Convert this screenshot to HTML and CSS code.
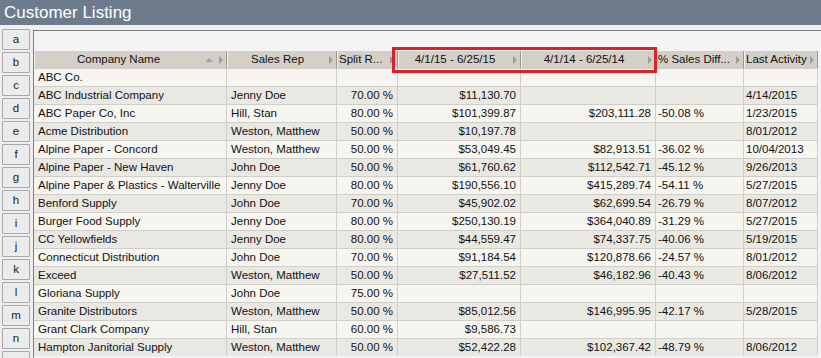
FILE: index.html
```html
<!DOCTYPE html>
<html>
<head>
<meta charset="utf-8">
<link rel="stylesheet" href="styles.css">
</head>
<body>
<div class="titlebar">Customer Listing</div>
<div class="content">
  <div class="letters">
    <div class="letter">a</div><div class="letter">b</div><div class="letter">c</div><div class="letter">d</div>
    <div class="letter">e</div><div class="letter">f</div><div class="letter">g</div><div class="letter">h</div>
    <div class="letter">i</div><div class="letter">j</div><div class="letter">k</div><div class="letter">l</div>
    <div class="letter">m</div><div class="letter">n</div><div class="letter"></div>
  </div>
  <div class="grid-frame">
    <div class="grid-top"></div>
    <table class="grid">
      <colgroup>
        <col class="c-company"><col class="c-rep"><col class="c-split"><col class="c-cur"><col class="c-prev"><col class="c-diff"><col class="c-last">
      </colgroup>
      <thead>
        <tr>
          <th><div class="hd"><span class="ht center">Company Name</span><span class="sort-up"></span><span class="arr"></span></div></th>
          <th><div class="hd"><span class="ht center">Sales Rep</span><span class="arr"></span></div></th>
          <th><div class="hd"><span class="ht">Split R...</span><span class="arr"></span></div></th>
          <th><div class="hd"><span class="ht center">4/1/15 - 6/25/15</span><span class="arr"></span></div></th>
          <th><div class="hd"><span class="ht center">4/1/14 - 6/25/14</span><span class="arr"></span></div></th>
          <th><div class="hd"><span class="ht">% Sales Diff...</span><span class="arr"></span></div></th>
          <th><div class="hd"><span class="ht">Last Activity</span><span class="arr"></span></div></th>
        </tr>
      </thead>
      <tbody>
        <tr><td>ABC Co.</td><td></td><td class="r"></td><td class="r"></td><td class="r"></td><td></td><td></td></tr>
        <tr><td>ABC Industrial Company</td><td>Jenny Doe</td><td class="r">70.00 %</td><td class="r">$11,130.70</td><td class="r"></td><td></td><td>4/14/2015</td></tr>
        <tr><td>ABC Paper Co, Inc</td><td>Hill, Stan</td><td class="r">80.00 %</td><td class="r">$101,399.87</td><td class="r">$203,111.28</td><td>-50.08 %</td><td>1/23/2015</td></tr>
        <tr><td>Acme Distribution</td><td>Weston, Matthew</td><td class="r">50.00 %</td><td class="r">$10,197.78</td><td class="r"></td><td></td><td>8/01/2012</td></tr>
        <tr><td>Alpine Paper - Concord</td><td>Weston, Matthew</td><td class="r">50.00 %</td><td class="r">$53,049.45</td><td class="r">$82,913.51</td><td>-36.02 %</td><td>10/04/2013</td></tr>
        <tr><td>Alpine Paper - New Haven</td><td>John Doe</td><td class="r">50.00 %</td><td class="r">$61,760.62</td><td class="r">$112,542.71</td><td>-45.12 %</td><td>9/26/2013</td></tr>
        <tr><td>Alpine Paper &amp; Plastics - Walterville</td><td>Jenny Doe</td><td class="r">80.00 %</td><td class="r">$190,556.10</td><td class="r">$415,289.74</td><td>-54.11 %</td><td>5/27/2015</td></tr>
        <tr><td>Benford Supply</td><td>John Doe</td><td class="r">70.00 %</td><td class="r">$45,902.02</td><td class="r">$62,699.54</td><td>-26.79 %</td><td>8/07/2012</td></tr>
        <tr><td>Burger Food Supply</td><td>Jenny Doe</td><td class="r">80.00 %</td><td class="r">$250,130.19</td><td class="r">$364,040.89</td><td>-31.29 %</td><td>5/27/2015</td></tr>
        <tr><td>CC Yellowfields</td><td>Jenny Doe</td><td class="r">80.00 %</td><td class="r">$44,559.47</td><td class="r">$74,337.75</td><td>-40.06 %</td><td>5/19/2015</td></tr>
        <tr><td>Connecticut Distribution</td><td>John Doe</td><td class="r">70.00 %</td><td class="r">$91,184.54</td><td class="r">$120,878.66</td><td>-24.57 %</td><td>8/01/2012</td></tr>
        <tr><td>Exceed</td><td>Weston, Matthew</td><td class="r">50.00 %</td><td class="r">$27,511.52</td><td class="r">$46,182.96</td><td>-40.43 %</td><td>8/06/2012</td></tr>
        <tr><td>Gloriana Supply</td><td>John Doe</td><td class="r">75.00 %</td><td class="r"></td><td class="r"></td><td></td><td></td></tr>
        <tr><td>Granite Distributors</td><td>Weston, Matthew</td><td class="r">50.00 %</td><td class="r">$85,012.56</td><td class="r">$146,995.95</td><td>-42.17 %</td><td>5/28/2015</td></tr>
        <tr><td>Grant Clark Company</td><td>Hill, Stan</td><td class="r">60.00 %</td><td class="r">$9,586.73</td><td class="r"></td><td></td><td></td></tr>
        <tr><td>Hampton Janitorial Supply</td><td>Weston, Matthew</td><td class="r">50.00 %</td><td class="r">$52,422.28</td><td class="r">$102,367.42</td><td>-48.79 %</td><td>8/06/2012</td></tr>
      </tbody>
    </table>
    <div class="highlight"></div>
  </div>
</div>
</body>
</html>
```
FILE: styles.css
```css
* { box-sizing: border-box; }
html, body { margin: 0; padding: 0; }
body {
  width: 821px;
  height: 358px;
  overflow: hidden;
  background: #efefef;
  font-family: "Liberation Sans", Arial, sans-serif;
  color: #111;
}
.titlebar {
  height: 25px;
  background: #6e7b8d;
  color: #fff;
  font-size: 17px;
  line-height: 26px;
  padding-left: 4px;
}
.content {
  display: flex;
  padding-top: 4px;
  height: 333px;
  overflow: hidden;
}
.letters {
  width: 33px;
  padding-left: 2px;
  display: flex;
  flex-direction: column;
  gap: 2px;
  flex: none;
}
.letter {
  width: 28px;
  height: 21px;
  flex: none;
  background: #ececec;
  border: 1px solid #a9a9a9;
  border-radius: 1px;
  font-size: 11.5px;
  line-height: 19px;
  text-align: center;
  color: #222;
}
.grid-frame {
  position: relative;
  flex: 1;
  margin-top: 1px;
  overflow: hidden;
  border-left: 1px solid #7d7d7d;
  border-top: 1px solid #7d7d7d;
  background: #f4f4f4;
}
.grid-top { height: 20px; }
.grid {
  table-layout: fixed;
  border-collapse: separate;
  border-spacing: 0;
  width: 784px;
  font-size: 11.5px;
}
.c-company { width: 193px; }
.c-rep { width: 110px; }
.c-split { width: 61px; }
.c-cur { width: 123px; }
.c-prev { width: 135px; }
.c-diff { width: 88px; }
.c-last { width: 74px; }
.grid th {
  height: 17px;
  padding: 0;
  background: #d5d0c7;
  border-right: 1px solid #9a978f;
  border-left: 1px solid #f3f1ec;
  font-weight: normal;
  color: #111;
}
.hd {
  display: flex;
  align-items: center;
  height: 17px;
  padding: 0 3px 0 1px;
}
.ht {
  flex: 1;
  min-width: 0;
  white-space: nowrap;
  overflow: hidden;
  text-align: left;
  line-height: 17px;
}
.ht.center { text-align: center; }
.arr {
  flex: none;
  width: 0;
  height: 0;
  margin-left: 3px;
  border-top: 4px solid transparent;
  border-bottom: 4px solid transparent;
  border-left: 4px solid #9b9b9b;
}
.sort-up {
  flex: none;
  width: 0;
  height: 0;
  margin-left: 4px;
  margin-right: 3px;
  border-left: 4px solid transparent;
  border-right: 4px solid transparent;
  border-bottom: 4px solid #a3a3a3;
}
.grid td {
  height: 18px;
  padding: 0 4px;
  border-right: 1px solid #cfcec9;
  border-top: 1px solid #cfcec9;
  white-space: nowrap;
  overflow: hidden;
  line-height: 17px;
  color: #111;
}
.grid td.r { text-align: right; }
.grid td:nth-child(6), .grid td:nth-child(7) { padding-left: 2px; }
.grid tbody tr:nth-child(odd) td { background: #f6f5f0; }
.grid tbody tr:nth-child(even) td { background: #e9e8e3; }
.highlight {
  position: absolute;
  left: 358px;
  top: 16px;
  width: 265px;
  height: 26px;
  border: 3px solid #d9232b;
  pointer-events: none;
}
```
